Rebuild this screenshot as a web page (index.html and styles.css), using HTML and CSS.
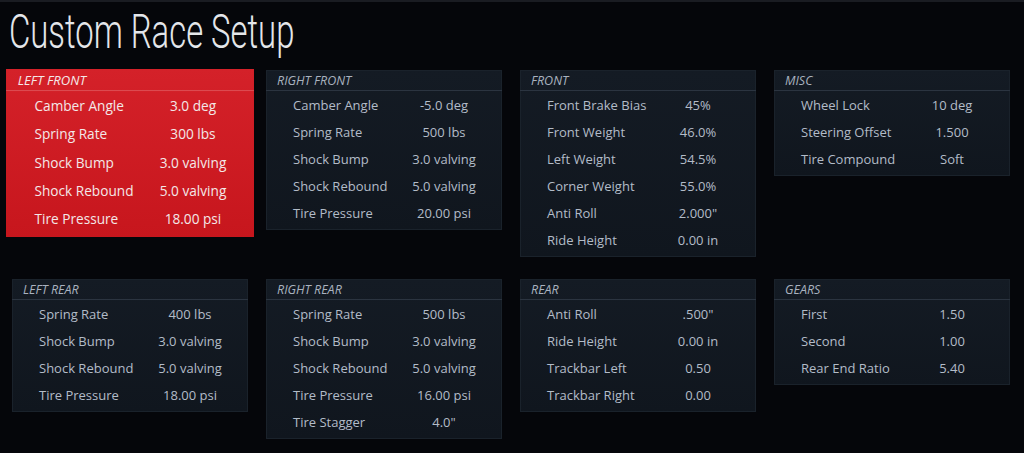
FILE: index.html
```html
<!doctype html>
<html lang="en" dir="ltr">
<head>
  <meta charset="utf-8" />
  <title>Custom Race Setup</title>
  <link rel="stylesheet" href="styles.css">
</head>
<body>

<h1 class="title"><span>Custom Race Setup</span></h1>

<div class="setup">
  <section class="panel is-active">
    <h2>Left Front</h2>
    <dl>
      <dt>Camber Angle</dt><dd>3.0 deg</dd>
      <dt>Spring Rate</dt><dd>300 lbs</dd>
      <dt>Shock Bump</dt><dd>3.0 valving</dd>
      <dt>Shock Rebound</dt><dd>5.0 valving</dd>
      <dt>Tire Pressure</dt><dd>18.00 psi</dd>
    </dl>
  </section>

  <section class="panel">
    <h2>Right Front</h2>
    <dl>
      <dt>Camber Angle</dt><dd>-5.0 deg</dd>
      <dt>Spring Rate</dt><dd>500 lbs</dd>
      <dt>Shock Bump</dt><dd>3.0 valving</dd>
      <dt>Shock Rebound</dt><dd>5.0 valving</dd>
      <dt>Tire Pressure</dt><dd>20.00 psi</dd>
    </dl>
  </section>

  <section class="panel">
    <h2>Front</h2>
    <dl>
      <dt>Front Brake Bias</dt><dd>45%</dd>
      <dt>Front Weight</dt><dd>46.0%</dd>
      <dt>Left Weight</dt><dd>54.5%</dd>
      <dt>Corner Weight</dt><dd>55.0%</dd>
      <dt>Anti Roll</dt><dd>2.000"</dd>
      <dt>Ride Height</dt><dd>0.00 in</dd>
    </dl>
  </section>

  <section class="panel">
    <h2>Misc</h2>
    <dl>
      <dt>Wheel Lock</dt><dd>10 deg</dd>
      <dt>Steering Offset</dt><dd>1.500</dd>
      <dt>Tire Compound</dt><dd>Soft</dd>
    </dl>
  </section>

  <section class="panel">
    <h2>Left Rear</h2>
    <dl>
      <dt>Spring Rate</dt><dd>400 lbs</dd>
      <dt>Shock Bump</dt><dd>3.0 valving</dd>
      <dt>Shock Rebound</dt><dd>5.0 valving</dd>
      <dt>Tire Pressure</dt><dd>18.00 psi</dd>
    </dl>
  </section>

  <section class="panel">
    <h2>Right Rear</h2>
    <dl>
      <dt>Spring Rate</dt><dd>500 lbs</dd>
      <dt>Shock Bump</dt><dd>3.0 valving</dd>
      <dt>Shock Rebound</dt><dd>5.0 valving</dd>
      <dt>Tire Pressure</dt><dd>16.00 psi</dd>
      <dt>Tire Stagger</dt><dd>4.0"</dd>
    </dl>
  </section>

  <section class="panel">
    <h2>Rear</h2>
    <dl>
      <dt>Anti Roll</dt><dd>.500"</dd>
      <dt>Ride Height</dt><dd>0.00 in</dd>
      <dt>Trackbar Left</dt><dd>0.50</dd>
      <dt>Trackbar Right</dt><dd>0.00</dd>
    </dl>
  </section>

  <section class="panel">
    <h2>Gears</h2>
    <dl>
      <dt>First</dt><dd>1.50</dd>
      <dt>Second</dt><dd>1.00</dd>
      <dt>Rear End Ratio</dt><dd>5.40</dd>
    </dl>
  </section>
</div>

</body>
</html>
```

FILE: styles.css
```css
body {
  margin: 0;
  padding: 0 12px;
  height: 453px;
  box-sizing: border-box;
  background-color: #05060a;
  border-top: 2px solid #1a1c22;
  font-family: "Open Sans", "Noto Sans", sans-serif;
  color: #b3bcc8;
  overflow: hidden;
}
.title {
  margin: 0 0 0 -3px;
  height: 64px;
  font-family: "Roboto", "Liberation Sans", sans-serif;
  font-weight: 300;
  font-size: 49px;
  line-height: 60px;
  color: #e4e6ea;
  white-space: nowrap;
}
.title span {
  display: inline-block;
  transform: scaleX(0.67);
  transform-origin: 0 50%;
}
.setup {
  display: grid;
  grid-template-columns: repeat(4, 236px);
  column-gap: 18px;
  row-gap: 22px;
  align-items: start;
  margin-top: 4px;
}
.panel {
  background-color: #121921;
  background-image: linear-gradient(180deg, #141b24 0%, #10161e 100%);
  box-shadow: inset 0 0 0 1px #1a222b;
  padding-bottom: 4px;
}
.panel h2 {
  margin: 0;
  height: 20px;
  padding-left: 11px;
  border-bottom: 1px solid #2b3440;
  font-size: 12.5px;
  font-weight: 400;
  font-style: italic;
  text-transform: uppercase;
  line-height: 21px;
  color: #a9b2bf;
}
.panel dl {
  margin: 0;
  display: grid;
  grid-template-columns: 101px 100px;
  grid-auto-rows: 27px;
  padding-left: 27px;
  align-items: center;
}
.panel dt,
.panel dd {
  margin: 0;
  font-size: 13px;
  white-space: nowrap;
}
.panel dd {
  text-align: center;
}
.panel.is-active {
  background-color: #cf1b22;
  background-image: linear-gradient(180deg, #d42129 0%, #c7161d 100%);
  box-shadow: none;
  transform: translateY(3px) scale(1.05);
  color: #f3e8e8;
}
.panel.is-active h2 {
  color: #f4e9e9;
  border-bottom-color: #dc4a50;
}
```
